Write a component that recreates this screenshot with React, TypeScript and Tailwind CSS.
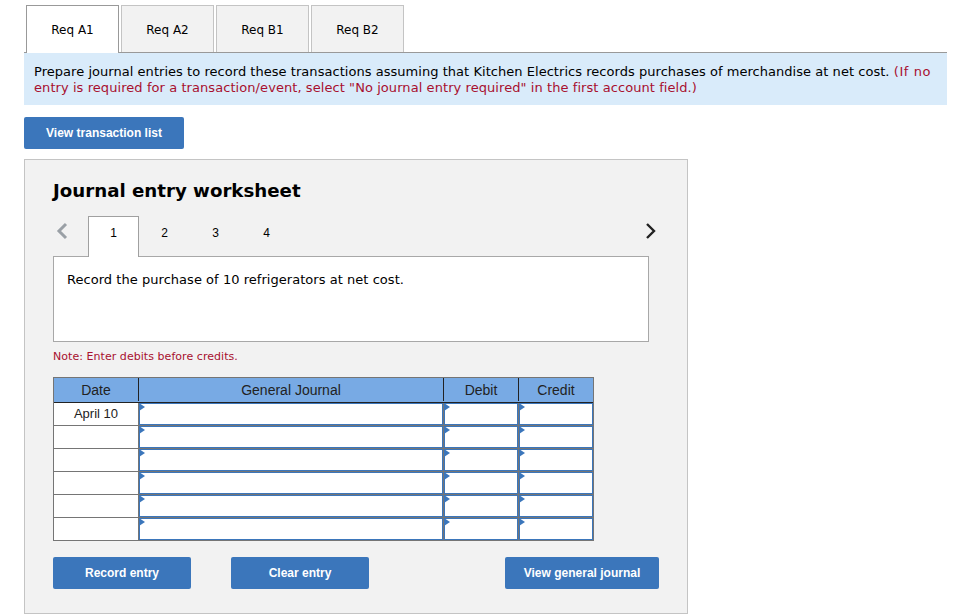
const verdana = "font-['Verdana','DejaVu_Sans',sans-serif]";

function ReqTab({ label, active }: { label: string; active?: boolean }) {
  return (
    <div
      className={
        active
          ? "w-[93px] h-[48px] -mb-px relative z-10 flex items-center justify-center bg-white border border-b-0 border-[#999] text-[12px] text-black pt-[1px]"
          : "w-[93px] h-[47px] flex items-center justify-center bg-[#f2f2f2] border border-b-0 border-[#c4c4c4] text-[12px] text-black pt-[2px]"
      }
    >
      {label}
    </div>
  );
}

function Btn({ label, w }: { label: string; w: string }) {
  return (
    <div className={`${w} h-[32px] flex items-center justify-center rounded-[2px] bg-[#3b76bb] text-white text-[12px] font-bold font-['Liberation_Sans',sans-serif]`}>
      {label}
    </div>
  );
}

function Cell({ w }: { w: string }) {
  return (
    <div className={`${w} h-full shrink-0 relative bg-white border border-[#3b76bb]`}>
      <svg className="absolute -left-[1px] -top-[1px]" width="6" height="8" viewBox="0 0 6 8">
        <path d="M0 0 L6 4 L0 8 Z" fill="#3b76bb" />
      </svg>
    </div>
  );
}

function Row({ date, last }: { date?: string; last?: boolean }) {
  return (
    <div className={`flex ${last ? "h-[22px]" : "h-[23px] border-b border-[#757575]"}`}>
      <div className="w-[85px] shrink-0 flex items-center justify-center bg-white border-r border-[#757575] text-[13px] text-[#222]">
        {date}
      </div>
      <Cell w="w-[304px]" />
      <div className="w-px bg-[#757575]" />
      <Cell w="w-[74px]" />
      <div className="w-px bg-[#757575]" />
      <Cell w="w-[74px]" />
    </div>
  );
}

function Step({ n, active }: { n: number; active?: boolean }) {
  return (
    <div
      className={
        active
          ? "w-[51px] h-[41px] -mb-px relative z-10 bg-white border border-b-0 border-[#a0a0a0] flex items-start justify-center pt-[8px] text-[12px] text-black font-['Liberation_Sans',sans-serif]"
          : "w-[51px] h-[40px] flex items-start justify-center pt-[9px] text-[12px] text-black font-['Liberation_Sans',sans-serif]"
      }
    >
      {n}
    </div>
  );
}

export default function App() {
  return (
    <div className={`${verdana} w-[960px] h-[616px] overflow-hidden bg-white pt-[5px] pl-[24px] pr-[13px] text-[13px] leading-[16px] text-black`}>
      <div className="flex gap-[2px] pl-[2px]">
        <ReqTab label="Req A1" active />
        <ReqTab label="Req A2" />
        <ReqTab label="Req B1" />
        <ReqTab label="Req B2" />
      </div>
      <div className="h-[53px] border-t border-[#999] bg-[#d9ebfa] px-[10px] pt-[11px] text-[13px] leading-[16px] tracking-[0.04px]">
        Prepare journal entries to record these transactions assuming that Kitchen Electrics records purchases of merchandise at net cost.{" "}
        <span className="text-[#a8102f] tracking-[0.6px]">(If no</span>{" "}
        <span className="text-[#a8102f] tracking-[0.07px]">entry is required for a transaction/event, select "No journal entry required" in the first account field.)</span>
      </div>
      <div className="mt-[12px]">
        <Btn label="View transaction list" w="w-[160px]" />
      </div>
      <div className="mt-[10px] w-[664px] h-[455px] border border-[#c4c4c4] bg-[#f2f2f2] pl-[28px] pr-[28px]">
        <h2 className="mt-[19px] text-[18.2px] leading-[24px] font-bold text-black">Journal entry worksheet</h2>
        <div className="mt-[13px] relative w-[596px]">
          <div className="flex items-end pl-[35px]">
            <Step n={1} active />
            <Step n={2} />
            <Step n={3} />
            <Step n={4} />
          </div>
          <svg className="absolute left-[3px] top-[6px]" width="12" height="18" viewBox="0 0 12 18" fill="none">
            <path d="M10 2 L3 9 L10 16" stroke="#9aa0a6" strokeWidth="3" />
          </svg>
          <svg className="absolute left-[592px] top-[6px]" width="12" height="18" viewBox="0 0 12 18" fill="none">
            <path d="M2 2 L9 9 L2 16" stroke="#222" strokeWidth="2.4" />
          </svg>
          <div className="h-[86px] bg-white border border-[#a8a8a8] px-[13px] pt-[15px] text-[13px] leading-[16px] tracking-[0.04px]">
            Record the purchase of 10 refrigerators at net cost.
          </div>
        </div>
        <p className="mt-[6px] pt-[1px] text-[11px] leading-[16px] tracking-[0.05px] text-[#a8102f]">Note: Enter debits before credits.</p>
        <div className="mt-[12px] w-[541px] border border-[#757575] font-['Liberation_Sans',sans-serif]">
          <div className="flex h-[25px] bg-[#78aae4] border-b border-[#222] text-[14px] text-[#222] pb-[1px]">
            <div className="w-[85px] flex items-center justify-center border-r border-[#222]">Date</div>
            <div className="w-[305px] flex items-center justify-center border-r border-[#222]">General Journal</div>
            <div className="w-[75px] flex items-center justify-center border-r border-[#222]">Debit</div>
            <div className="flex-1 flex items-center justify-center">Credit</div>
          </div>
          <Row date="April 10" />
          <Row />
          <Row />
          <Row />
          <Row />
          <Row last />
        </div>
        <div className="mt-[16px] flex w-[606px] justify-between">
          <div className="flex gap-[40px]">
            <Btn label="Record entry" w="w-[138px]" />
            <Btn label="Clear entry" w="w-[138px]" />
          </div>
          <Btn label="View general journal" w="w-[154px]" />
        </div>
      </div>
    </div>
  );
}
